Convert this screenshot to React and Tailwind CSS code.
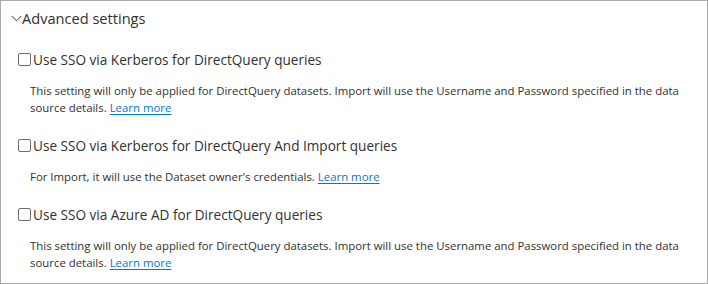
import React from 'react';

const font = { fontFamily: '"Open Sans", "Noto Sans", sans-serif' };

const items = [
  {
    label: 'Use SSO via Kerberos for DirectQuery queries',
    desc: 'This setting will only be applied for DirectQuery datasets. Import will use the Username and Password specified in the data source details.',
  },
  {
    label: 'Use SSO via Kerberos for DirectQuery And Import queries',
    desc: "For Import, it will use the Dataset owner's credentials.",
  },
  {
    label: 'Use SSO via Azure AD for DirectQuery queries',
    desc: 'This setting will only be applied for DirectQuery datasets. Import will use the Username and Password specified in the data source details.',
  },
];

function Chevron() {
  return (
    <svg width="11" height="7" viewBox="0 0 11 7" className="shrink-0">
      <polyline points="0.5,0.8 5.5,5.8 10.5,0.8" fill="none" stroke="#323130" strokeWidth="1" />
    </svg>
  );
}

function Setting({ label, desc }) {
  return (
    <div className="flex flex-col">
      <label className="flex items-center gap-[2px] h-[20px] text-[13.6px] leading-[20px] text-[#323130]">
        <span className="w-[13px] h-[13px] border border-[#6e6e6e] rounded-[2px] bg-white shrink-0" />
        <span>{label}</span>
      </label>
      <p className="mt-[12.5px] ml-[12px] text-[11.4px] leading-[17px] text-[#323130]">
        {desc}{' '}
        <a href="#" className="text-[#0078d4] underline underline-offset-2">Learn more</a>
      </p>
    </div>
  );
}

export default function App() {
  return (
    <div style={font} className="w-[708px] h-[284px] bg-white border border-[#a9a9a9] pl-[10px] pt-[6px]">
      <div className="flex items-center h-[22px] text-[14.6px] leading-[22px] text-[#323130]">
        <Chevron />
        <span>Advanced settings</span>
      </div>
      <div className="mt-[20.5px] ml-[7px] flex flex-col gap-[19.5px]">
        {items.map((it) => (
          <Setting key={it.label} {...it} />
        ))}
      </div>
    </div>
  );
}
